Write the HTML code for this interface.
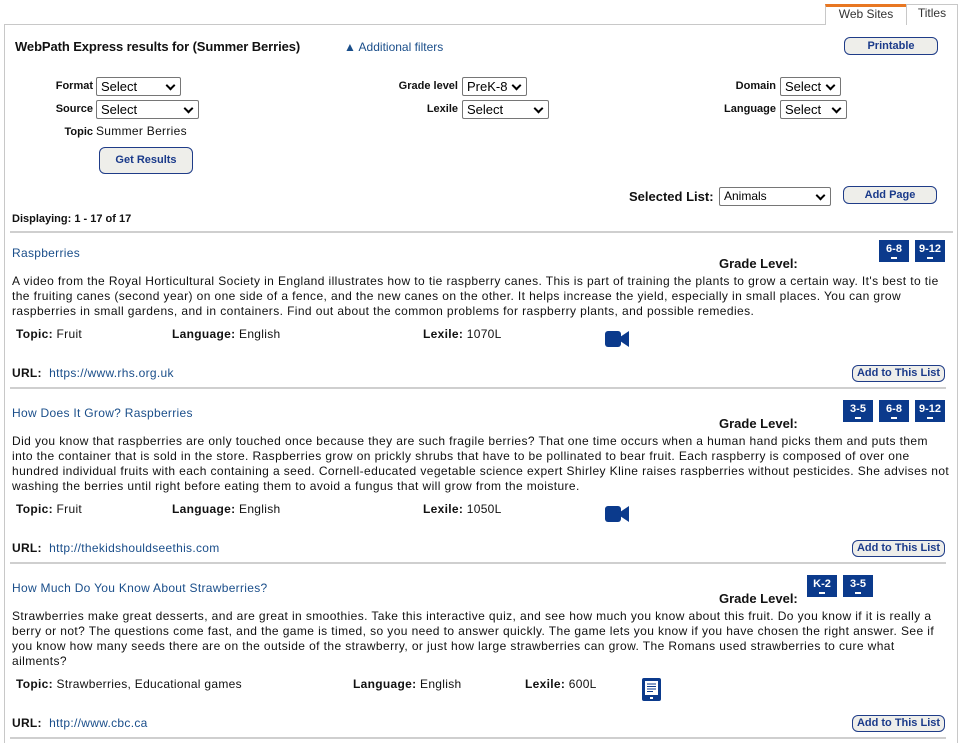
<!DOCTYPE html>
<html><head><meta charset="utf-8"><style>
*{margin:0;padding:0;box-sizing:border-box}
html,body{width:961px;height:743px;overflow:hidden}
body{background:#fff;font-family:"Liberation Sans",Arial,sans-serif;font-size:12px;color:#111;position:relative}
.a{position:absolute;white-space:nowrap;letter-spacing:0.3px}
.box{position:absolute;left:4px;top:24px;width:954px;height:719px;border:1px solid #c8c8c8;border-bottom:none}
.tab{position:absolute;top:4px;height:21px;border:1px solid #c8c8c8;border-bottom:none;font-size:12px;text-align:center;line-height:17px;background:#fff;color:#333}
.btn{position:absolute;border:1px solid #1f3c88;border-radius:6px;background:#eeeeea;color:#1a3a8a;font-weight:bold;font-size:11px;text-align:center}
.sel{position:absolute;height:19px;border:1px solid #767676;border-radius:2px;background:#fff;font-size:13px;padding-left:4px;line-height:17px;color:#000}
.sel::after{content:"";position:absolute;right:6px;top:4px;width:5px;height:5px;border-right:2px solid #000;border-bottom:2px solid #000;transform:rotate(45deg)}
.lbl{position:absolute;font-weight:bold;font-size:11px;text-align:right;white-space:nowrap}
.sep{position:absolute;left:10px;height:2px;background:#cfcfcf}
.link{color:#1a4e8a}
.badge{position:absolute;width:30px;height:22px;background:#0b3a8c;color:#fff;font-weight:bold;font-size:11px;text-align:center;line-height:15px;padding-top:2px}
.badge::after{content:"";position:absolute;left:12px;bottom:3px;width:6px;height:2px;background:#fff}
.gl{position:absolute;font-weight:bold;font-size:13px}
.desc{position:absolute;left:12px;width:945px;line-height:15px;font-size:12px;white-space:nowrap;letter-spacing:0.4px}
b{font-weight:bold}
</style></head><body>
<div class="box"></div>
<div class="tab" style="left:825px;width:82px;border-top:3px solid #e87722;line-height:15px">Web Sites</div>
<div class="tab" style="left:906px;width:52px">Titles</div>

<div class="a" style="left:15px;top:39px;font-weight:bold;font-size:13px;letter-spacing:-0.1px">WebPath Express results for (Summer Berries)</div>
<div class="a link" style="left:344px;top:40px;letter-spacing:0">▲ Additional filters</div>
<div class="btn" style="left:844px;top:37px;width:94px;height:18px;line-height:16px">Printable</div>

<div class="lbl" style="left:20px;width:73px;top:80px">Format</div>
<div class="sel" style="left:96px;top:77px;width:85px">Select</div>
<div class="lbl" style="left:20px;width:73px;top:103px">Source</div>
<div class="sel" style="left:96px;top:100px;width:103px">Select</div>
<div class="lbl" style="left:20px;width:73px;top:126px">Topic</div>
<div class="a" style="left:96px;top:124px">Summer Berries</div>
<div class="btn" style="left:99px;top:147px;width:94px;height:27px;line-height:25px">Get Results</div>

<div class="lbl" style="left:360px;width:98px;top:80px">Grade level</div>
<div class="sel" style="left:462px;top:77px;width:65px">PreK-8</div>
<div class="lbl" style="left:360px;width:98px;top:103px">Lexile</div>
<div class="sel" style="left:462px;top:100px;width:87px">Select</div>

<div class="lbl" style="left:680px;width:96px;top:80px">Domain</div>
<div class="sel" style="left:780px;top:77px;width:61px">Select</div>
<div class="lbl" style="left:680px;width:96px;top:103px">Language</div>
<div class="sel" style="left:780px;top:100px;width:67px">Select</div>

<div class="a" style="left:629px;top:189px;font-weight:bold;font-size:13px;letter-spacing:0">Selected List:</div>
<div class="sel" style="left:719px;top:187px;width:112px;font-size:12px">Animals</div>
<div class="btn" style="left:843px;top:186px;width:94px;height:18px;line-height:16px">Add Page</div>

<div class="a" style="left:12px;top:213px;font-weight:bold;font-size:11px;letter-spacing:0">Displaying: 1 - 17 of 17</div>
<div class="sep" style="top:231px;width:943px"></div>

<!-- Entry 1 -->
<div class="a link" style="left:12px;top:246px">Raspberries</div>
<div class="gl" style="left:719px;top:256px">Grade Level:</div>
<div class="badge" style="left:879px;top:240px">6-8</div>
<div class="badge" style="left:915px;top:240px">9-12</div>
<div class="desc" style="top:274px">A video from the Royal Horticultural Society in England illustrates how to tie raspberry canes. This is part of training the plants to grow a certain way. It's best to tie<br>the fruiting canes (second year) on one side of a fence, and the new canes on the other. It helps increase the yield, especially in small places. You can grow<br>raspberries in small gardens, and in containers. Find out about the common problems for raspberry plants, and possible remedies.</div>
<div class="a" style="left:16px;top:327px"><b>Topic:</b> Fruit</div>
<div class="a" style="left:172px;top:327px"><b>Language:</b> English</div>
<div class="a" style="left:423px;top:327px"><b>Lexile:</b> 1070L</div>
<svg class="a" style="left:605px;top:330px" width="24" height="18" viewBox="0 0 24 18"><rect x="0" y="1" width="16" height="16" rx="3" fill="#0b3a8c"/><path d="M15 7L24 1V17L15 11Z" fill="#0b3a8c"/></svg>
<div class="a" style="left:12px;top:366px"><b>URL:</b>&nbsp; <span class="link">https://www.rhs.org.uk</span></div>
<div class="btn" style="left:852px;top:365px;width:93px;height:17px;line-height:15px">Add to This List</div>
<div class="sep" style="top:387px;width:936px"></div>

<!-- Entry 2 -->
<div class="a link" style="left:12px;top:406px">How Does It Grow? Raspberries</div>
<div class="gl" style="left:719px;top:416px">Grade Level:</div>
<div class="badge" style="left:843px;top:400px">3-5</div>
<div class="badge" style="left:879px;top:400px">6-8</div>
<div class="badge" style="left:915px;top:400px">9-12</div>
<div class="desc" style="top:434px">Did you know that raspberries are only touched once because they are such fragile berries? That one time occurs when a human hand picks them and puts them<br>into the container that is sold in the store. Raspberries grow on prickly shrubs that have to be pollinated to bear fruit. Each raspberry is composed of over one<br>hundred individual fruits with each containing a seed. Cornell-educated vegetable science expert Shirley Kline raises raspberries without pesticides. She advises not<br>washing the berries until right before eating them to avoid a fungus that will grow from the moisture.</div>
<div class="a" style="left:16px;top:502px"><b>Topic:</b> Fruit</div>
<div class="a" style="left:172px;top:502px"><b>Language:</b> English</div>
<div class="a" style="left:423px;top:502px"><b>Lexile:</b> 1050L</div>
<svg class="a" style="left:605px;top:505px" width="24" height="18" viewBox="0 0 24 18"><rect x="0" y="1" width="16" height="16" rx="3" fill="#0b3a8c"/><path d="M15 7L24 1V17L15 11Z" fill="#0b3a8c"/></svg>
<div class="a" style="left:12px;top:541px"><b>URL:</b>&nbsp; <span class="link">http://thekidshouldseethis.com</span></div>
<div class="btn" style="left:852px;top:540px;width:93px;height:17px;line-height:15px">Add to This List</div>
<div class="sep" style="top:562px;width:936px"></div>

<!-- Entry 3 -->
<div class="a link" style="left:12px;top:581px">How Much Do You Know About Strawberries?</div>
<div class="gl" style="left:719px;top:591px">Grade Level:</div>
<div class="badge" style="left:807px;top:575px">K-2</div>
<div class="badge" style="left:843px;top:575px">3-5</div>
<div class="desc" style="top:609px">Strawberries make great desserts, and are great in smoothies. Take this interactive quiz, and see how much you know about this fruit. Do you know if it is really a<br>berry or not? The questions come fast, and the game is timed, so you need to answer quickly. The game lets you know if you have chosen the right answer. See if<br>you know how many seeds there are on the outside of the strawberry, or just how large strawberries can grow. The Romans used strawberries to cure what<br>ailments?</div>
<div class="a" style="left:16px;top:677px"><b>Topic:</b> Strawberries, Educational games</div>
<div class="a" style="left:353px;top:677px"><b>Language:</b> English</div>
<div class="a" style="left:525px;top:677px"><b>Lexile:</b> 600L</div>
<svg class="a" style="left:641px;top:677px" width="21" height="25" viewBox="0 0 21 25"><rect x="1" y="1" width="19" height="23" rx="2" fill="#0b3a8c"/><rect x="4" y="4" width="13" height="14" fill="#fff"/><path d="M6 7h9M6 9.5h9M6 12h9M6 14.5h6" stroke="#0b3a8c" stroke-width="1"/><rect x="9" y="20" width="3" height="2" fill="#fff"/></svg>
<div class="a" style="left:12px;top:716px"><b>URL:</b>&nbsp; <span class="link">http://www.cbc.ca</span></div>
<div class="btn" style="left:852px;top:715px;width:93px;height:17px;line-height:15px">Add to This List</div>
<div class="sep" style="top:737px;width:936px"></div>
</body></html>
